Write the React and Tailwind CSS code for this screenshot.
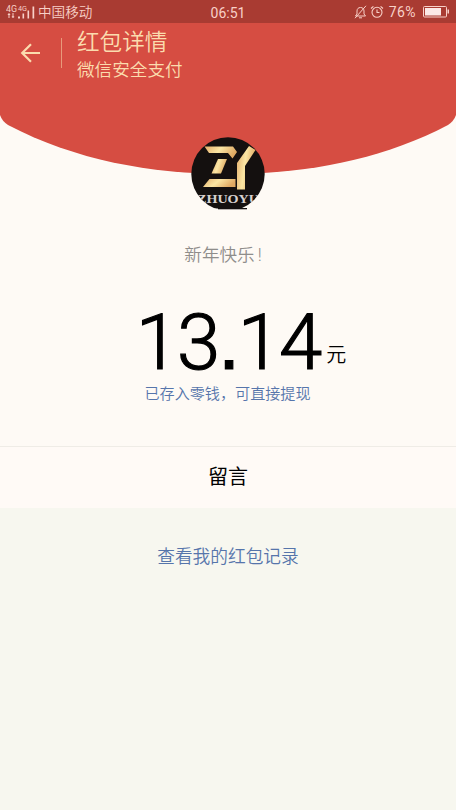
function SignalIcon() {
  return (
    <svg width="30" height="16" viewBox="0 0 30 16" fill="#f8d0c8" aria-hidden="true">
      <g fontFamily="Roboto, sans-serif">
        <text x="0" y="7.8" fontSize="8.5" textLength="11" lengthAdjust="spacingAndGlyphs">4G</text>
        <text x="12" y="7.4" fontSize="7.5" textLength="9" lengthAdjust="spacingAndGlyphs">4G</text>
      </g>
      <path d="M3 9v5M7 9v5M1.8 10.5h2.4M5.8 12.8h2.4" stroke="#f8d0c8" strokeWidth="1" />
      <path d="M12 12.5h2v2h-2zM16.5 9.5h1.6v5h-1.6zM21.5 6.5h1.6v8h-1.6zM26.5 2.5h1.7v12h-1.7z" />
    </svg>
  )
}

function StatusBar() {
  return (
    <div className="flex h-[23px] items-center bg-[#a93b32] text-[#f8d0c8]">
      <div className="flex w-[152px] items-center gap-0.5 pl-1.5">
        <SignalIcon />
        <span className="pt-0.5 text-[13.6px] leading-none font-[350]">中国移动</span>
      </div>
      <span className="w-[152px] pt-0.5 text-center text-[14px] leading-none">06:51</span>
      <div className="flex w-[152px] items-center justify-end pr-[7px]">
        <svg width="13" height="14" viewBox="0 0 13 14" fill="none" stroke="#f8d0c8" strokeWidth="1" aria-hidden="true">
          <path d="M1.5 11h10l-1.5-2V6c0-2-1.2-3.5-3.5-3.5S3 4 3 6v3zM5 12.8h3M12 .8 1 13.2" />
        </svg>
        <svg className="ml-[3px]" width="14" height="14" viewBox="0 0 14 14" fill="none" stroke="#f8d0c8" strokeWidth="1.1" aria-hidden="true">
          <circle cx="7" cy="7.3" r="5" />
          <path d="M7 4.5v3h2.5M1 3.5 3.4 1.3M13 3.5 10.6 1.3" />
        </svg>
        <span className="ml-[5px] text-[14px] leading-none tracking-[0.4px]">76%</span>
        <svg className="ml-[7px]" width="26" height="12" viewBox="0 0 26 12" aria-hidden="true">
          <rect x=".5" y=".5" width="23" height="10.5" rx="1" fill="none" stroke="#f8d0c8" />
          <path d="M2 2h16v7.5H2z" fill="#fbe8e6" />
          <path d="M24.5 3.5H26v4h-1.5z" fill="#f8d0c8" />
        </svg>
      </div>
    </div>
  )
}

function Header() {
  return (
    <header className="relative h-[151px] w-full text-[#fbdcae]">
      <svg className="absolute inset-0" width="456" height="151" viewBox="0 23 456 151" aria-hidden="true">
        <path
          d="M0 23H456V115Q454 121 448 125C381 160 306 174 228 174S75 160 8 125Q2 121 0 115Z"
          fill="#d64d42"
        />
      </svg>
      <div className="relative flex items-start pl-5">
        <svg className="mt-5" width="21" height="20" viewBox="0 0 21 20" fill="none" stroke="#fbdcae" strokeWidth="2.2" aria-hidden="true">
          <path d="M20 10H2.5M11 1.2 2.2 10l8.8 8.8" />
        </svg>
        <div className="mt-[15px] ml-5 h-[30px] w-px bg-[#e89a7b]" />
        <div className="mt-1.5 ml-[15px] font-[350]">
          <h1 className="text-[22.6px] leading-7">红包详情</h1>
          <p className="text-[17.6px] leading-[26px]">微信安全支付</p>
        </div>
      </div>
    </header>
  )
}

function Avatar() {
  return (
    <svg className="relative -mt-[37px]" width="74" height="74" viewBox="0 0 74 74" aria-hidden="true">
      <defs>
        <linearGradient id="gold" x1="0" y1="0" x2="1" y2="0.3">
          <stop offset="0" stopColor="#e3ad6a" />
          <stop offset=".5" stopColor="#fbe6a4" />
          <stop offset="1" stopColor="#dfa862" />
        </linearGradient>
        <clipPath id="face">
          <path d="M0 0H74V71.5H0z" />
        </clipPath>
        <clipPath id="round">
          <circle cx="37" cy="37" r="36.7" />
        </clipPath>
      </defs>
      <g clipPath="url(#face)">
        <g clipPath="url(#round)">
          <path d="M0 0h74v74H0z" fill="#14100f" />
          <path d="M13.5 9.5H42l4 5.5-4.5 6.5L37 16H18z" fill="url(#gold)" />
          <path d="M27 22h9l-6 14.5h-9.5z" fill="url(#gold)" />
          <path d="M18.5 42h26v8H12z" fill="url(#gold)" />
          <path d="m58 9 6.5 4L54 29v23.5h-8V26z" fill="url(#gold)" />
          <text
            x="37"
            y="66.3"
            textAnchor="middle"
            textLength="62"
            lengthAdjust="spacingAndGlyphs"
            fontFamily="Liberation Serif, serif"
            fontWeight="700"
            fontSize="11.5"
            fill="#d8d2cf"
          >
            ZHUOYU
          </text>
        </g>
      </g>
      <path d="M27 71h29v1.3H27z" fill="#14100f" />
    </svg>
  )
}

export default function App() {
  return (
    <div className='flex h-[810px] w-[456px] flex-col overflow-hidden bg-[#f7f7ef] font-["Roboto","Noto_Sans_CJK_SC",sans-serif]'>
      <StatusBar />
      <main className="flex h-[485px] flex-col items-center bg-[#fefaf5]">
        <Header />
        <Avatar />
        <p className="mt-[30px] pr-2.5 text-[17.6px] leading-7 font-[350] text-[#8f8d8b]">
          新年快乐<span className="ml-[3px]">!</span>
        </p>
        <div className="mt-[41px] ml-[26px] flex h-16 items-start text-black">
          <span className="text-[78px] leading-[64px] font-[350] tracking-[-2.1px] [-webkit-text-stroke:1.2px_black]">
            13<span className='font-["Liberation_Sans"]'>.</span>14
          </span>
          <span className="mt-[31px] ml-[6px] text-[20px] leading-7 font-[350]">元</span>
        </div>
        <p className="mt-2 pr-px text-[15.1px] leading-6 font-[350] text-[#5675ab]">已存入零钱，可直接提现</p>
        <section className="mt-auto flex h-[62px] w-full items-center justify-center border-t border-[#efece6] bg-[#fffaf6] pb-px text-[20px] text-black">
          留言
        </section>
      </main>
      <a className="mt-[35px] text-center text-[17.7px] leading-7 font-[350] text-[#5675ab]">查看我的红包记录</a>
    </div>
  )
}
